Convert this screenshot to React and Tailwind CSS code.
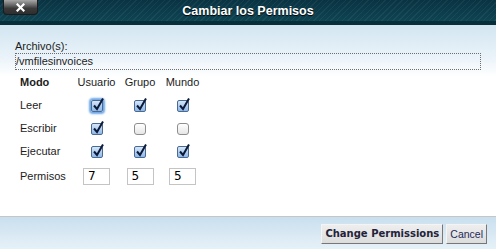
const rows = [
  { label: "Leer", values: [true, true, true], focus: 0 },
  { label: "Escribir", values: [true, false, false] },
  { label: "Ejecutar", values: [true, true, true] },
];

const cols = [
  { name: "Usuario", cell: "w-[39px]" },
  { name: "Grupo", cell: "w-[32px] ml-[8px]" },
  { name: "Mundo", cell: "w-[35px] ml-[9px]" },
];

export default function App() {
  return (
    <div className="w-[496px] h-[249px] flex flex-col overflow-hidden bg-white font-['Liberation_Sans',Arial,sans-serif] text-[11px] text-[#1c1c1c]">
      {/* Title bar */}
      <div className="relative shrink-0">
        <div className="h-[21px] flex items-center justify-center bg-[repeating-linear-gradient(135deg,rgba(255,255,255,0.05)_0px,rgba(255,255,255,0.05)_1px,transparent_1px,transparent_4px),linear-gradient(to_bottom,#0a3342,#0e4453)]">
          <span className="text-white font-bold text-[12.5px] leading-none pt-[1px] [text-shadow:0_1px_1px_#000]">
            Cambiar los Permisos
          </span>
        </div>
        <div className="h-[4px] bg-[#062f3a]" />
        <button className="absolute left-[3px] top-0 w-[35px] h-[15px] rounded-b-[4px] border border-t-0 border-[#1c1c1c] bg-[linear-gradient(to_bottom,#a8a8a8_0%,#6a6a6a_35%,#3a3a3a_60%,#2e2e2e_100%)] flex items-center justify-center">
          <svg width="9" height="9" viewBox="0 0 9 9">
            <path d="M1.5 1.5 L7.5 7.5 M7.5 1.5 L1.5 7.5" stroke="#fff" strokeWidth="2.2" strokeLinecap="square" />
          </svg>
        </button>
      </div>

      {/* Body */}
      <div className="flex-1 pl-[15px] pr-[15px] pt-[15px] bg-[linear-gradient(to_bottom,#d2e5f1_0px,#eaf3f9_32px,#ffffff_52px)]">
        <div className="leading-[13px]">Archivo(s):</div>
        <div className="h-[17px] border border-dotted border-[#6e6e6e] flex items-center pl-[0px] leading-none">
          /vmfilesinvoices
        </div>

        <div className="ml-[5px] mt-[1px]">
          <div className="h-[23px] flex items-center">
            <div className="w-[57px] font-bold">Modo</div>
            {cols.map((c) => (
              <div key={c.name} className={`${c.cell} flex justify-center whitespace-nowrap`}>
                {c.name}
              </div>
            ))}
          </div>

          {rows.map((r) => (
            <div key={r.label} className="h-[23px] flex items-center">
              <div className="w-[57px]">{r.label}</div>
              {cols.map((c, i) => (
                <div key={c.name} className={`${c.cell} flex justify-center`}>
                  <Checkbox checked={r.values[i]} focus={r.focus === i} />
                </div>
              ))}
            </div>
          ))}

          <div className="h-[26px] flex items-center">
            <div className="w-[57px]">Permisos</div>
            {cols.map((c, i) => (
              <div key={c.name} className={`${c.cell} flex justify-center`}>
                <input
                  readOnly
                  value={["7", "5", "5"][i]}
                  className="w-[27px] h-[17px] border border-[#c4c4c4] bg-white pl-[4px] text-[12px] text-black outline-none font-['DejaVu_Sans',sans-serif] leading-none"
                />
              </div>
            ))}
          </div>
        </div>
      </div>

      {/* Footer */}
      <div className="h-[33px] shrink-0 border-t border-[#c6c6c6] bg-[linear-gradient(to_bottom,#c9dfee,#e6f1f8)] flex justify-end items-start pt-[7px] pr-[9px] gap-[3px]">
        <button className="h-[20px] px-[3px] border border-[#f4f4f4] border-r-[#777] border-b-[#777] bg-[linear-gradient(to_bottom,#eeeeee,#dcdcdc)] font-['DejaVu_Sans',sans-serif] font-bold text-[10px] text-[#22223a] leading-none">
          Change Permissions
        </button>
        <button className="h-[20px] px-[3px] border border-[#f4f4f4] border-r-[#777] border-b-[#777] bg-[linear-gradient(to_bottom,#eeeeee,#dcdcdc)] text-[10.5px] text-[#1e2a5a] leading-none">
          Cancel
        </button>
      </div>
    </div>
  );
}

function Checkbox({ checked, focus }) {
  if (!checked) {
    return (
      <span className="block w-[12px] h-[12px] rounded-[3px] border border-[#8e8e8e] bg-[linear-gradient(to_bottom,#ffffff,#e6e6e6)]" />
    );
  }
  return (
    <span
      className={`relative block w-[12px] h-[12px] rounded-[2px] border border-[#4a6a94] bg-[linear-gradient(to_bottom,#d6e6f8,#8fb8e8)] ${
        focus ? "shadow-[0_0_2px_2px_#6fa7e6]" : ""
      }`}
    >
      <svg className="absolute left-[0px] top-[-4px] overflow-visible" width="13" height="14" viewBox="0 0 13 14">
        <path d="M2 8.5 L5 12 L11 1.5" fill="none" stroke="#0c1a3a" strokeWidth="2" strokeLinejoin="miter" />
      </svg>
    </span>
  );
}
